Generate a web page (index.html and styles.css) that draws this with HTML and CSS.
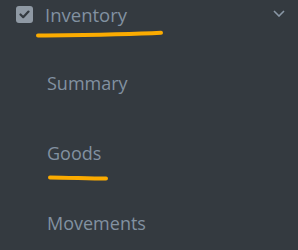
FILE: index.html
```html
<!DOCTYPE html>
<html lang="en">
<head>
	<meta charset="UTF-8">
	<title>Inventory menu</title>
	<link rel="stylesheet" href="styles.css">
</head>
<body>
<div class="side-menu">
	<div class="menu-head">
		<span class="menu-check">
			<svg width="11" height="9" viewBox="0 0 11 9"><path d="M1.5 4.5 L4.2 7.2 L9.5 1.6" fill="none" stroke="#343a40" stroke-width="2.2" stroke-linecap="round" stroke-linejoin="round"/></svg>
		</span>
		<span class="menu-title">Inventory</span>
		<svg class="menu-chevron" width="12" height="7" viewBox="0 0 12 7"><path d="M1 1 L6 6 L11 1" fill="none" stroke="#8a97a6" stroke-width="1.6"/></svg>
		<svg class="mark mark-title" width="128" height="8" viewBox="0 0 128 8"><path d="M2 5.6 C40 5.2 90 4.8 125 2.8" fill="none" stroke="#fbab00" stroke-width="4" stroke-linecap="round"/></svg>
	</div>
	<ul class="menu-list">
		<li class="menu-item">Summary</li>
		<li class="menu-item">Goods
			<svg class="mark mark-goods" width="60" height="8" viewBox="0 0 60 8"><path d="M2 3.4 C20 3.6 40 4.4 58 4.6" fill="none" stroke="#fbab00" stroke-width="4" stroke-linecap="round"/></svg>
		</li>
		<li class="menu-item">Movements</li>
	</ul>
</div>
</body>
</html>
```

FILE: styles.css
```css
*{margin: 0; padding: 0}
ul,ol{list-style: none}
html,body{
	height: 100%;
	background-color: #343a40;
}
.side-menu{
	font-family: "Open Sans", "Liberation Sans", sans-serif;
	color: #8291a1;
}
.menu-head{
	position: relative;
	display: flex;
	align-items: center;
	height: 30px;
	padding-left: 16px;
	padding-right: 13px;
}
.menu-check{
	display: flex;
	align-items: center;
	justify-content: center;
	width: 17px;
	height: 17px;
	border-radius: 3px;
	background-color: #8f99a4;
	margin-top: -2px;
}
.menu-title{
	font-size: 18.5px;
	margin-left: 12px;
	margin-top: -1px;
	flex: 1;
}
.menu-chevron{
	margin-top: -3px;
}
.mark{
	position: absolute;
}
.mark-title{
	left: 36px;
	top: 30px;
}
.menu-list{
	padding-left: 47px;
}
.menu-item{
	position: relative;
	font-size: 18px;
	height: 70px;
	line-height: 24px;
	padding-top: 42px;
	box-sizing: border-box;
}
.menu-item:first-child{
	height: 69px;
	padding-top: 41px;
}
.mark-goods{
	left: 1px;
	top: 75px;
}
```
